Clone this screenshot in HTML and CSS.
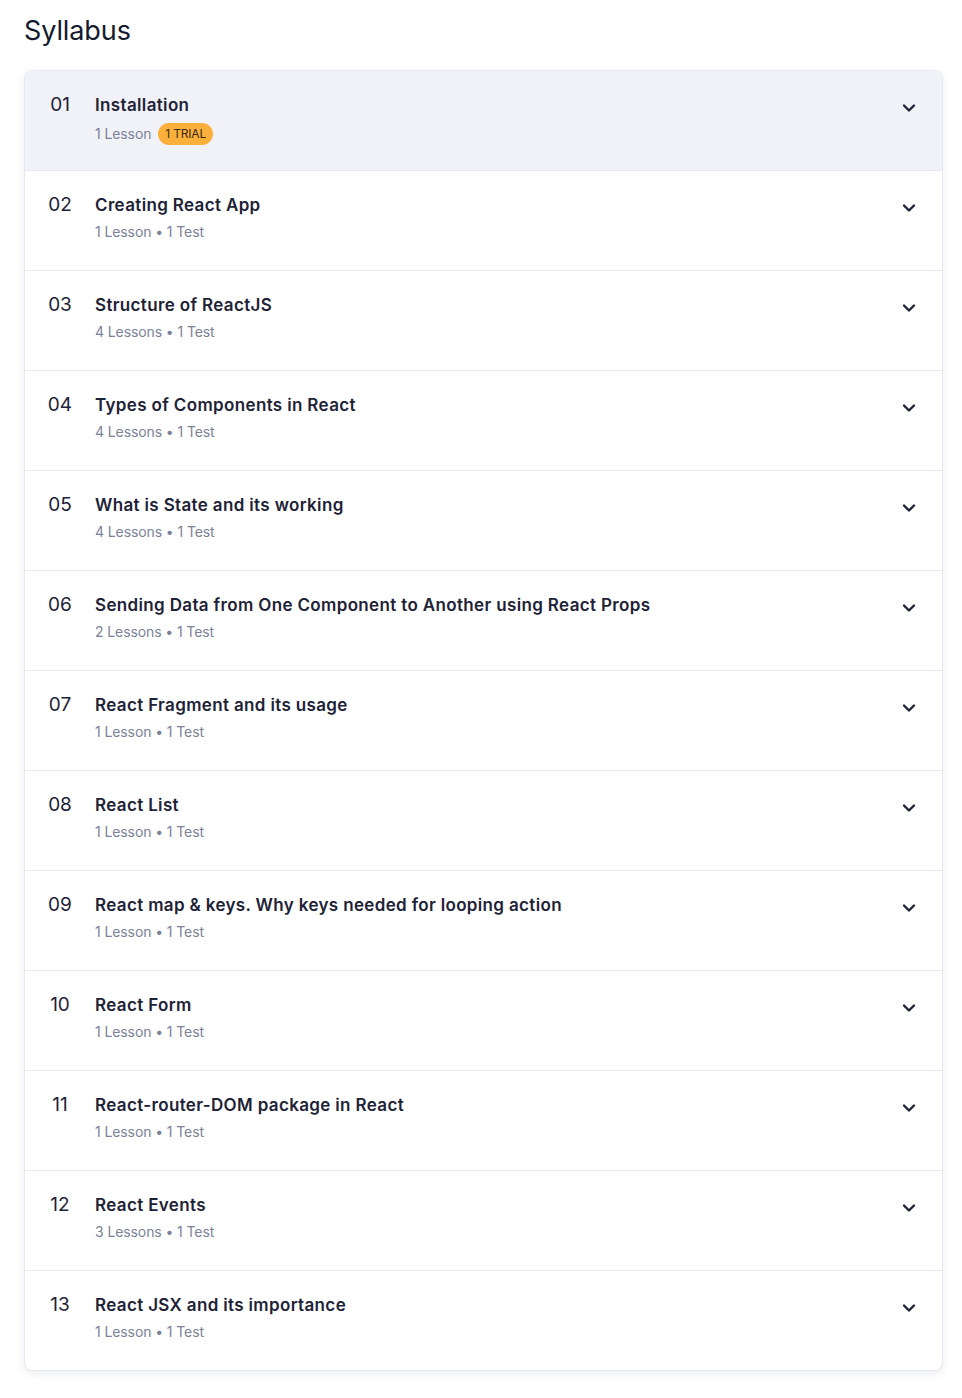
FILE: index.html
```html
<!DOCTYPE html>
<html>
<head>
<meta charset="utf-8">
<link rel="stylesheet" href="styles.css">
</head>
<body>
<div class="page">
  <h2 class="heading">Syllabus</h2>
  <div class="card">
    <div class="row active">
      <div class="num">01</div>
      <div class="info">
        <div class="title">Installation</div>
        <div class="meta">1 Lesson <span class="badge">1 TRIAL</span></div>
      </div>
      <svg class="chev" viewBox="0 0 14 10" width="14" height="10"><path d="M2 2.5 L7 7.5 L12 2.5" fill="none" stroke="#1e2236" stroke-width="2.4" stroke-linecap="round" stroke-linejoin="round"/></svg>
    </div>
    <div class="row">
      <div class="num">02</div>
      <div class="info"><div class="title">Creating React App</div><div class="meta">1 Lesson • 1 Test</div></div>
      <svg class="chev" viewBox="0 0 14 10" width="14" height="10"><path d="M2 2.5 L7 7.5 L12 2.5" fill="none" stroke="#1e2236" stroke-width="2.4" stroke-linecap="round" stroke-linejoin="round"/></svg>
    </div>
    <div class="row">
      <div class="num">03</div>
      <div class="info"><div class="title">Structure of ReactJS</div><div class="meta">4 Lessons • 1 Test</div></div>
      <svg class="chev" viewBox="0 0 14 10" width="14" height="10"><path d="M2 2.5 L7 7.5 L12 2.5" fill="none" stroke="#1e2236" stroke-width="2.4" stroke-linecap="round" stroke-linejoin="round"/></svg>
    </div>
    <div class="row">
      <div class="num">04</div>
      <div class="info"><div class="title">Types of Components in React</div><div class="meta">4 Lessons • 1 Test</div></div>
      <svg class="chev" viewBox="0 0 14 10" width="14" height="10"><path d="M2 2.5 L7 7.5 L12 2.5" fill="none" stroke="#1e2236" stroke-width="2.4" stroke-linecap="round" stroke-linejoin="round"/></svg>
    </div>
    <div class="row">
      <div class="num">05</div>
      <div class="info"><div class="title">What is State and its working</div><div class="meta">4 Lessons • 1 Test</div></div>
      <svg class="chev" viewBox="0 0 14 10" width="14" height="10"><path d="M2 2.5 L7 7.5 L12 2.5" fill="none" stroke="#1e2236" stroke-width="2.4" stroke-linecap="round" stroke-linejoin="round"/></svg>
    </div>
    <div class="row">
      <div class="num">06</div>
      <div class="info"><div class="title">Sending Data from One Component to Another using React Props</div><div class="meta">2 Lessons • 1 Test</div></div>
      <svg class="chev" viewBox="0 0 14 10" width="14" height="10"><path d="M2 2.5 L7 7.5 L12 2.5" fill="none" stroke="#1e2236" stroke-width="2.4" stroke-linecap="round" stroke-linejoin="round"/></svg>
    </div>
    <div class="row">
      <div class="num">07</div>
      <div class="info"><div class="title">React Fragment and its usage</div><div class="meta">1 Lesson • 1 Test</div></div>
      <svg class="chev" viewBox="0 0 14 10" width="14" height="10"><path d="M2 2.5 L7 7.5 L12 2.5" fill="none" stroke="#1e2236" stroke-width="2.4" stroke-linecap="round" stroke-linejoin="round"/></svg>
    </div>
    <div class="row">
      <div class="num">08</div>
      <div class="info"><div class="title">React List</div><div class="meta">1 Lesson • 1 Test</div></div>
      <svg class="chev" viewBox="0 0 14 10" width="14" height="10"><path d="M2 2.5 L7 7.5 L12 2.5" fill="none" stroke="#1e2236" stroke-width="2.4" stroke-linecap="round" stroke-linejoin="round"/></svg>
    </div>
    <div class="row">
      <div class="num">09</div>
      <div class="info"><div class="title">React map &amp; keys. Why keys needed for looping action</div><div class="meta">1 Lesson • 1 Test</div></div>
      <svg class="chev" viewBox="0 0 14 10" width="14" height="10"><path d="M2 2.5 L7 7.5 L12 2.5" fill="none" stroke="#1e2236" stroke-width="2.4" stroke-linecap="round" stroke-linejoin="round"/></svg>
    </div>
    <div class="row">
      <div class="num">10</div>
      <div class="info"><div class="title">React Form</div><div class="meta">1 Lesson • 1 Test</div></div>
      <svg class="chev" viewBox="0 0 14 10" width="14" height="10"><path d="M2 2.5 L7 7.5 L12 2.5" fill="none" stroke="#1e2236" stroke-width="2.4" stroke-linecap="round" stroke-linejoin="round"/></svg>
    </div>
    <div class="row">
      <div class="num">11</div>
      <div class="info"><div class="title">React-router-DOM package in React</div><div class="meta">1 Lesson • 1 Test</div></div>
      <svg class="chev" viewBox="0 0 14 10" width="14" height="10"><path d="M2 2.5 L7 7.5 L12 2.5" fill="none" stroke="#1e2236" stroke-width="2.4" stroke-linecap="round" stroke-linejoin="round"/></svg>
    </div>
    <div class="row">
      <div class="num">12</div>
      <div class="info"><div class="title">React Events</div><div class="meta">3 Lessons • 1 Test</div></div>
      <svg class="chev" viewBox="0 0 14 10" width="14" height="10"><path d="M2 2.5 L7 7.5 L12 2.5" fill="none" stroke="#1e2236" stroke-width="2.4" stroke-linecap="round" stroke-linejoin="round"/></svg>
    </div>
    <div class="row">
      <div class="num">13</div>
      <div class="info"><div class="title">React JSX and its importance</div><div class="meta">1 Lesson • 1 Test</div></div>
      <svg class="chev" viewBox="0 0 14 10" width="14" height="10"><path d="M2 2.5 L7 7.5 L12 2.5" fill="none" stroke="#1e2236" stroke-width="2.4" stroke-linecap="round" stroke-linejoin="round"/></svg>
    </div>
  </div>
</div>
</body>
</html>
```

FILE: styles.css
```css
* { box-sizing: border-box; }
body {
  margin: 0;
  background: #ffffff;
  font-family: Inter, "Noto Sans", sans-serif;
  color: #1e2236;
}
.page {
  padding: 14px 19px 26px 24px;
}
.heading {
  margin: 0 0 22px 0;
  font-size: 27px;
  line-height: 34px;
  font-weight: 400;
  color: #141a2e;
  letter-spacing: -0.1px;
}
.card {
  border: 1px solid #e6e8f2;
  border-radius: 8px;
  overflow: hidden;
  box-shadow: 0 3px 8px rgba(30, 34, 60, 0.08);
  background: #fff;
}
.row {
  height: 100px;
  display: flex;
  align-items: flex-start;
  border-top: 1px solid #e6e8f2;
  padding-top: 22px;
}
.row:first-child { border-top: none; padding-top: 22px; height: 99px; }
.row.active { background: #f1f2f8; }
.num {
  width: 70px;
  flex: none;
  text-align: center;
  font-size: 19px;
  line-height: 24px;
  font-weight: 400;
  color: #1e2236;
}
.info { flex: 1; }
.title {
  font-size: 17px;
  line-height: 24px;
  font-weight: 600;
  color: #1e2236;
  letter-spacing: 0.35px;
}
.meta {
  margin-top: 5px;
  font-size: 14px;
  line-height: 20px;
  color: #7c8297;
  display: flex;
  align-items: center;
  gap: 6px;
  letter-spacing: -0.1px;
}
.row.active .meta { margin-top: 6px; gap: 7px; }
.badge {
  display: inline-block;
  background: #fbb03b;
  color: #3a2a10;
  font-size: 12px;
  line-height: 22px;
  height: 22px;
  padding: 0 7px;
  border-radius: 11px;
  letter-spacing: -0.2px;
}
.chev {
  flex: none;
  margin: 10px 26px 0 0;
}
```
